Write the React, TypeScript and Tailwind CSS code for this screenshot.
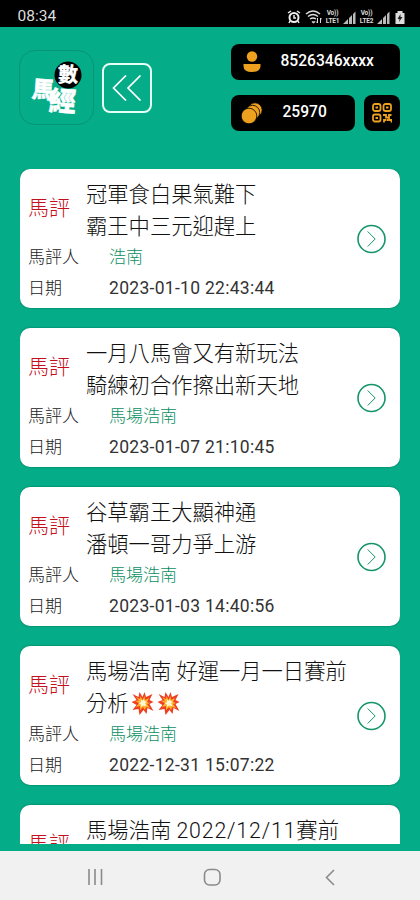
import React from "react";

const cjk = "font-['Roboto','Noto_Sans_CJK_TC',sans-serif]";

function Burst() {
  return (
    <svg viewBox="0 0 24 24" className="mb-[2px] ml-px h-[24px] w-[25px]">
      <path d="M12 6 14 1l1.500 5L22 3l-3 6 4 2-4 2 4 7-6-3-1 6-3-4-4 5-1-6-6 1 4-5-5-3 5-2-4-6 6 3 1-5z" fill="#ef3f20" />
      <path d="m12 9 2-4 .5 4 4-2-2 4 3 1-3 1 3 4-4-1-1 3-2-3-3 3v-4l-4 1 3-4-4-2 4-.5L5.500 6l4 2 .5-3z" fill="#ffb52e" />
      <path d="m12 10 1.500-2 .5 2 2.500 1-2 1 1.500 3-3.500-.5-2 1.500v-2.500l-2.500-1.500 2.500-.5V8.500z" fill="#fff8da" />
    </svg>
  );
}

type Item = { title: React.ReactNode[]; author?: string; date?: string };

const items: Item[] = [
  { title: ["冠軍食白果氣難下", "霸王中三元迎趕上"], author: "浩南", date: "2023-01-10 22:43:44" },
  { title: ["一月八馬會又有新玩法", "騎練初合作擦出新天地"], author: "馬場浩南", date: "2023-01-07 21:10:45" },
  { title: ["谷草霸王大顯神通", "潘頓一哥力爭上游"], author: "馬場浩南", date: "2023-01-03 14:40:56" },
  { title: ["馬場浩南 好運一月一日賽前", <>分析<Burst /><Burst /></>], author: "馬場浩南", date: "2022-12-31 15:07:22" },
  { title: [<>馬場浩南 <span className="tracking-[0.850px]">2022/12/11</span>賽前</>] },
];

function Card({ item }: { item: Item }) {
  return (
    <article className="flex h-[139px] shrink-0 items-center rounded-[10px] bg-white pl-2 pr-[14px] shadow-[0_0_2px_#00664d]">
      <div className="flex h-full flex-1 flex-col pt-[10px]">
        <div className="flex h-16">
          <div className="flex h-[59px] w-[58px] items-center text-[21px] font-light text-[#c40f1c]">馬評</div>
          <div className="text-[21.300px] font-light text-[#111]">
            {item.title.map((line, i) => (
              <div key={i} className="flex h-8 items-center whitespace-pre">{line}</div>
            ))}
          </div>
        </div>
        {item.author && (
          <div className="flex h-[29px] items-center text-[17px] font-light text-[#222]">
            <span className="w-[81px]">馬評人</span>
            <span className="text-[#0b8f62]">{item.author}</span>
          </div>
        )}
        {item.date && (
          <div className="flex h-[34px] items-center text-[17px] font-light text-[#222]">
            <span className="w-[81px]">日期</span>
            <span className="mb-px text-[17.500px] font-normal tracking-[0.290px] text-[#333]">{item.date}</span>
          </div>
        )}
      </div>
      <svg viewBox="0 0 30 30" className="h-[30px] w-[30px]" fill="none" stroke="#169568">
        <circle cx="15.500" cy="15" r="13.500" strokeWidth="1.600" />
        <path d="m11.700 7.500 7.500 7.500-7.500 7.500" strokeWidth="1" />
      </svg>
    </article>
  );
}

function Signal() {
  return (
    <svg viewBox="0 0 13 13" className="h-[13px] w-[13px]" fill="#bbb"><path d="M0 13 5 8v5zM6 7l3-3v9H6zM10 3l2.500-2.500V13H10z" /></svg>
  );
}

function Lte({ n }: { n: string }) {
  return (
    <div className="flex w-[17px] flex-col items-center text-[6.500px] font-bold leading-[8px] tracking-[-0.200px] text-[#ddd]">
      <span>Vo))</span><span>LTE{n}</span>
    </div>
  );
}

function Logo() {
  return (
    <div className="flex h-[75px] w-[75px] items-center justify-center rounded-[16px] border border-[#079575]">
      <svg viewBox="0 0 75 75" className="h-[75px] w-[75px] shrink-0">
        <g fontFamily="Noto Sans CJK TC, sans-serif" fontWeight="900" fill="#fff" stroke="#fff">
          <text x="13" y="48" fontSize="23" strokeWidth=".5" transform="rotate(4 23 38)">馬</text>
          <text x="30" y="61" fontSize="27" strokeWidth=".4" transform="rotate(4 43 50)">經</text>
          <circle cx="49" cy="25" r="13.500" fill="#000" stroke="none" />
          <text x="39" y="32" fontSize="20" strokeWidth=".2">數</text>
        </g>
      </svg>
    </div>
  );
}

export default function App() {
  return (
    <main className={`flex h-[900px] w-[420px] flex-col overflow-hidden bg-[#04ad87] ${cjk}`}>
      <header className="flex h-[27px] shrink-0 items-center justify-between bg-black pl-[17.500px] pr-[15px] pt-[7px]">
        <span className="text-[15.500px] leading-none text-[#ddd]">08:34</span>
        <div className="flex items-center gap-[2px]">
          <svg viewBox="0 0 14 14" className="mr-[2px] h-[14px] w-[14px]" fill="none" stroke="#eee" strokeWidth="2"><circle cx="7" cy="7.500" r="4.500" /><path d="M1 3l3-2M10 1l3 2M3 11l-1 2M11 11l1 2M7 5v3h2" strokeWidth="1.500" /></svg>
          <svg viewBox="0 0 17 14" className="h-[14px] w-[17px]" fill="none" stroke="#ddd" strokeWidth="1.500"><path d="M1 4q7-6 14 0M3 6.500q5-4 10 0M5 9q3-2 6 0M7 11.500l1.500 1 1.500-1" /><path d="M12.500 8v5M15.500 13V8M11 11.500l1.500 1.500M17 9.500 15.500 8" strokeWidth="1" /></svg>
          <Lte n="1" /><Signal /><Lte n="2" /><Signal />
          <svg viewBox="0 0 9 14" className="ml-[3px] h-[14px] w-[10px]"><path d="M0 3h2V1h5v2h2v11H0z" fill="#ddd" /><path d="M5 4 2 9h2l-.5 3L7 7H5z" fill="#222" /></svg>
        </div>
      </header>
      <section className="flex h-[142px] shrink-0 items-start pl-[19px] pr-5">
        <div className="pt-[23px]"><Logo /></div>
        <button className="ml-2 mt-[36px] flex h-[50px] w-[50px] items-center justify-center rounded-[8px] border-2 border-[#e5fff6]">
          <svg viewBox="0 0 30 26" className="h-[26px] w-[30px]" fill="none" stroke="#fff" strokeWidth="1.700"><path d="M14 .5 1.500 13 14 25.500M28.500.500 16 13l12.500 12.500" /></svg>
        </button>
        <div className="ml-auto flex w-[169px] flex-col gap-[15px] pt-[17px] text-[15.600px] font-medium text-white">
          <div className="flex h-9 items-center rounded-[8px] bg-black pl-[11.500px]">
            <svg viewBox="0 0 18 22" className="h-[22px] w-[18px]" fill="#eda11f"><circle cx="9" cy="5.500" r="5.200" /><path d="M.5 13h17v2q0 6-8.500 6T.5 15z" /></svg>
            <span className="ml-5">8526346xxxx</span>
          </div>
          <div className="flex gap-[9px]">
            <div className="flex h-9 w-[124px] items-center rounded-[8px] bg-black pl-[9px]">
              <svg viewBox="0 0 24 24" className="h-6 w-6" fill="#eda11f" stroke="#000" strokeWidth=".8"><circle cx="15" cy="9" r="7.200" /><circle cx="12.500" cy="11.500" r="7.200" /><circle cx="9" cy="15" r="7.800" /></svg>
              <span className="ml-[18.500px]">25970</span>
            </div>
            <div className="flex h-9 w-9 items-center justify-center rounded-[8px] bg-black">
              <svg viewBox="0 0 20 20" className="h-5 w-5" fill="none" stroke="#eda11f" strokeWidth="1.800"><rect x="1" y="1" width="7.500" height="7" rx="2" /><rect x="11.500" y="1" width="7.500" height="7" rx="2" /><rect x="1" y="11.500" width="7.500" height="7" rx="2" /><path d="M3.500 4.500H6M14 4.500h2.500M3.500 15H6M11 12h3v2.500h3V12h2.500M12 19.500V17h2.500M17 15v2h2.500v2.500M16 17h-1" /></svg>
            </div>
          </div>
        </div>
      </section>
      <section className="mx-5 flex h-[675px] shrink-0 flex-col gap-5 overflow-hidden">
        {items.map((item, i) => <Card key={i} item={item} />)}
      </section>
      <footer className="mt-[7px] flex h-[49px] shrink-0 items-center bg-[#f1f1f1] pt-[3px]">
        <svg viewBox="0 0 420 24" className="h-6 w-[420px]" fill="none" stroke="#8b8b8b" strokeWidth="1.600"><path d="M89 4v16M95 4v16M101.500 4v16M334 5l-7.500 7.500L334 20" /><rect x="204.500" y="4.500" width="15.500" height="15.500" rx="5" /></svg>
      </footer>
    </main>
  );
}
